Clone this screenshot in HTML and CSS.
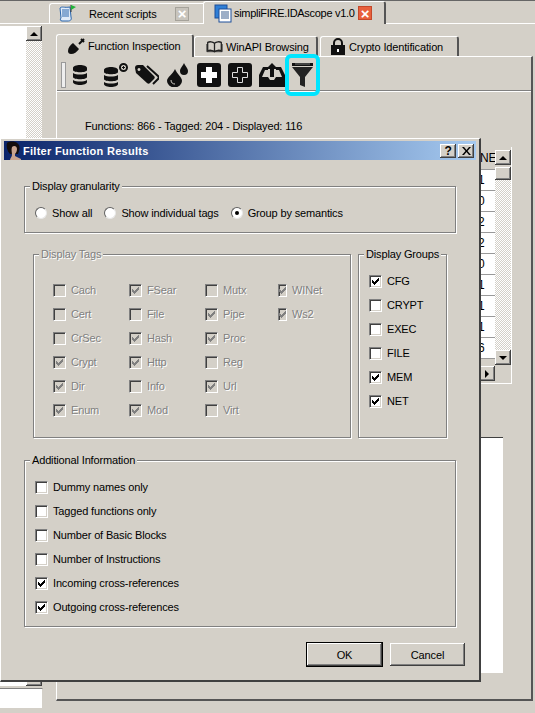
FILE: index.html
```html
<!DOCTYPE html>
<html>
   <head>
      <meta charset="utf-8">
      <meta name="viewport" content="width=device-width, initial-scale=1.0"/>
      <title>Filter Function Results</title>
      <link rel="stylesheet" href="styles.css">
   </head>
   <body>
      <!--shared check mark-->
      <svg class="defs" width="0" height="0">
         <symbol id="tick" viewBox="0 0 7 7"><path d="M0 2h1v3H0zM1 3h1v3H1zM2 4h1v3H2zM3 3h1v3H3zM4 2h1v3H4zM5 1h1v3H5zM6 0h1v3H6z"/></symbol>
      </svg>

      <div class="tabbar">
         <div class="tab">
            <svg class="tab-icon" width="18" height="19" viewBox="0 0 18 19"><path d="M1 4c2-2 4 0 10-1l1 10c1 3-1 4-3 4H3c-2 0-2-2-1-3L1 4z" fill="#dfeaf8" stroke="#2a66ad"/><path d="M3 6h7M3 8h7M3 10h7M3 12h7" stroke="#2a66ad"/><path d="M12 1v7" stroke="#333"/><path d="M12 1l5 2-5 3z" fill="#21b33a"/></svg>
            <span class="tab-text recent">Recent scripts</span>
            <span class="close off">×</span>
         </div>
         <div class="tab active">
            <svg class="tab-icon" width="18" height="19" viewBox="0 0 18 19"><rect x="1" y="1" width="12" height="13" fill="#2f7fd6" stroke="#1c4f9a"/><rect x="5" y="5" width="12" height="13" fill="#fff" stroke="#1c4f9a"/><path d="M7 8h8M7 10h8M7 12h8M7 14h8" stroke="#3a5f8f"/></svg>
            <span class="tab-text plugin-name">simpliFIRE.IDAscope v1.0</span>
            <span class="close">×</span>
         </div>
      </div>

      <div class="workspace">
         <div class="side">
            <div class="side-top">
               <div class="list"></div>
               <div class="vscroll">
                  <span class="sbtn"><i class="up"></i></span>
                  <span class="track"></span>
                  <span class="sbtn"></span>
               </div>
            </div>
            <div class="side-box"></div>
         </div>

         <div class="plugin">
            <div class="subtabs">
               <div class="subtab active">
                  <svg width="17" height="17" viewBox="0 0 17 17"><path d="M16 1l-5 5" stroke="#111" stroke-width="2"/><path d="M13 1l3 3" stroke="#111" stroke-width="2"/><path d="M5 5l6 6c-2 3-5 5-8 5-2 0-3-1-3-3 0-3 2-6 5-8z" fill="#111"/></svg>
                  <span>Function Inspection</span>
               </div>
               <div class="subtab">
                  <svg width="17" height="14" viewBox="0 0 20 15"><path d="M10 3C8 1 4 1 2 2v10c2-1 6-1 8 1 2-2 6-2 8-1V2c-2-1-6-1-8 1zM10 3v10" fill="#d4d0c8" stroke="#222" stroke-width="1.500"/><path d="M1 4v9h18V4" fill="none" stroke="#222"/></svg>
                  <span>WinAPI Browsing</span>
               </div>
               <div class="subtab">
                  <svg width="14" height="17" viewBox="0 0 14 17"><path d="M3 8V5a4 4 0 0 1 8 0v3" fill="none" stroke="#111" stroke-width="2"/><path d="M0 7h14v10H0z" fill="#111"/><path d="M6 11h2v3H6z" fill="#fff"/></svg>
                  <span>Crypto Identification</span>
               </div>
            </div>

            <div class="pane">
               <div class="toolbar">
                  <span class="grip"></span>
                  <svg class="tool" width="24" height="20" viewBox="0 0 24 20"><path d="M0 3c0-4 14-4 14 0v2c0 3-14 3-14 0zM0 8c3 2 11 2 14 0v4c0 3-14 3-14 0zM0 15c3 2 11 2 14 0v2c0 4-14 4-14 0z"/></svg>
                  <svg class="tool" width="24" height="24" viewBox="0 0 24 24"><path d="M0 7c0-4 14-4 14 0v2c0 3-14 3-14 0zM0 12c3 2 11 2 14 0v4c0 3-14 3-14 0zM0 19c3 2 11 2 14 0v2c0 4-14 4-14 0z"/><circle cx="19.500" cy="4.500" r="3.500" fill="#d4d0c8" stroke="#111" stroke-width="2"/><path d="M18 4h3v1h-3zM19 3h1v3h-1z"/></svg>
                  <svg class="tool" width="24" height="20" viewBox="0 0 24 20"><path d="M0 3c0-2 1-3 3-3h5l11 11c1 1 1 2 0 3l-4 4c-1 1-2 1-3 0L1 8zM4 3a1.500 1.500 0 1 0 .01 0z" fill-rule="evenodd"/><path d="M12 1l11 10c1 1 1 2 0 3l-5 5" fill="none" stroke="#111" stroke-width="2"/></svg>
                  <svg class="tool" width="24" height="24" viewBox="0 0 24 24"><path d="M9 6c2 5 7 8 7 12a7 6 0 0 1-15 0c0-4 6-7 8-12z"/><path d="M5 17c0 3 2 4 4 4" fill="none" stroke="#d4d0c8"/><path d="M18 0c1 3 4 5 4 8a4 4 0 0 1-8 0c0-3 3-5 4-8z"/></svg>
                  <svg class="tool" width="24" height="24" viewBox="0 0 24 24"><rect width="24" height="24" rx="3"/><path d="M9 4h6v5h5v6h-5v5H9v-5H4V9h5z" fill="#fff"/></svg>
                  <svg class="tool" width="24" height="24" viewBox="0 0 24 24"><rect width="24" height="24" rx="3"/><path d="M9.500 4.500h5v5h5v5h-5v5h-5v-5h-5v-5h5z" fill="#111" stroke="#ddd"/></svg>
                  <svg class="tool" width="26" height="24" viewBox="0 0 26 24"><path d="M0 12l4-8h5v3H6l-3 7h6l2 3h4l2-3h6l-3-7h-3V4h5l4 8v12H0z"/><path d="M13 0l6 6h-4v8h-4V6H7z"/></svg>
                  <span class="funnel">
                     <svg class="tool" width="21" height="24" viewBox="0 0 21 24"><path d="M0 0h21v3H0z" fill="#111"/><path d="M0 4h21l-8 10v10l-5-2v-8z" fill="#222"/><path d="M3 1h15" stroke="#777"/></svg>
                  </span>
               </div>

               <p class="status">Functions: 866 - Tagged: 204 - Displayed: 116</p>

               <div class="results">
                  <div class="results-main">
                     <div class="cells">
                        <div class="cell head">NET</div>
                        <div class="cell">1</div>
                        <div class="cell">0</div>
                        <div class="cell">2</div>
                        <div class="cell">2</div>
                        <div class="cell">0</div>
                        <div class="cell">1</div>
                        <div class="cell">1</div>
                        <div class="cell">1</div>
                        <div class="cell">6</div>
                     </div>
                     <div class="hscroll"><span class="sbtn"><i class="right"></i></span></div>
                  </div>
                  <div class="vscroll table-scroll">
                     <span class="sbtn"><i class="up"></i></span>
                     <span class="sbtn thumb"></span>
                     <span class="track"></span>
                     <span class="sbtn"><i class="down"></i></span>
                  </div>
               </div>

               <div class="notes"></div>
            </div>
         </div>
      </div>

      <!--the filter dialog floats over the main window-->
      <div class="dialog">
         <div class="titlebar">
            <svg width="17" height="19" viewBox="0 0 17 19"><path d="M1 2c2-2 8-2 10 0 3 2 3 5 2 8l-1 3H4C1 10 0 5 1 2z" fill="#140d0c"/><path d="M6 6c2-2 5-1 5 2 0 2-1 4-2 5v2l6 3v1H4c0-2 2-3 2-5 0-3-1-5 0-8z" fill="#c9a48f"/></svg>
            <span class="title-text">Filter Function Results</span>
            <span class="title-btn help">?</span>
            <span class="title-btn">
               <svg width="9" height="8" viewBox="0 0 9 8"><path d="M0 0h2l2.500 3L7 0h2L5.500 4 9 8H7L4.500 5 2 8H0l3.500-4z"/></svg>
            </span>
         </div>

         <div class="dialog-body">
            <fieldset class="group granularity">
               <legend>Display granularity</legend>
               <div class="radios">
                  <label class="opt"><span class="radio"></span>Show all</label>
                  <label class="opt"><span class="radio"></span>Show individual tags</label>
                  <label class="opt"><span class="radio on"></span>Group by semantics</label>
               </div>
            </fieldset>

            <div class="group-row">
               <fieldset class="group tags off">
                  <legend>Display Tags</legend>
                  <div class="tag-grid">
                     <label class="opt"><span class="box"></span>Cach</label>
                     <label class="opt"><span class="box"></span>Cert</label>
                     <label class="opt"><span class="box"></span>CrSec</label>
                     <label class="opt"><span class="box"><svg><use href="#tick"/></svg></span>Crypt</label>
                     <label class="opt"><span class="box"><svg><use href="#tick"/></svg></span>Dir</label>
                     <label class="opt"><span class="box"><svg><use href="#tick"/></svg></span>Enum</label>
                     <label class="opt"><span class="box"><svg><use href="#tick"/></svg></span>FSear</label>
                     <label class="opt"><span class="box"></span>File</label>
                     <label class="opt"><span class="box"><svg><use href="#tick"/></svg></span>Hash</label>
                     <label class="opt"><span class="box"><svg><use href="#tick"/></svg></span>Http</label>
                     <label class="opt"><span class="box"></span>Info</label>
                     <label class="opt"><span class="box"><svg><use href="#tick"/></svg></span>Mod</label>
                     <label class="opt"><span class="box"></span>Mutx</label>
                     <label class="opt"><span class="box"><svg><use href="#tick"/></svg></span>Pipe</label>
                     <label class="opt"><span class="box"><svg><use href="#tick"/></svg></span>Proc</label>
                     <label class="opt"><span class="box"></span>Reg</label>
                     <label class="opt"><span class="box"><svg><use href="#tick"/></svg></span>Url</label>
                     <label class="opt"><span class="box"></span>Virt</label>
                     <label class="opt"><span class="box"><svg><use href="#tick"/></svg></span>WINet</label>
                     <label class="opt"><span class="box"><svg><use href="#tick"/></svg></span>Ws2</label>
                  </div>
               </fieldset>

               <fieldset class="group groups">
                  <legend>Display Groups</legend>
                  <div class="stack">
                     <label class="opt"><span class="box"><svg><use href="#tick"/></svg></span>CFG</label>
                     <label class="opt"><span class="box"></span>CRYPT</label>
                     <label class="opt"><span class="box"></span>EXEC</label>
                     <label class="opt"><span class="box"></span>FILE</label>
                     <label class="opt"><span class="box"><svg><use href="#tick"/></svg></span>MEM</label>
                     <label class="opt"><span class="box"><svg><use href="#tick"/></svg></span>NET</label>
                  </div>
               </fieldset>
            </div>

            <fieldset class="group extra">
               <legend>Additional Information</legend>
               <div class="stack">
                  <label class="opt"><span class="box"></span>Dummy names only</label>
                  <label class="opt"><span class="box"></span>Tagged functions only</label>
                  <label class="opt"><span class="box"></span>Number of Basic Blocks</label>
                  <label class="opt"><span class="box"></span>Number of Instructions</label>
                  <label class="opt"><span class="box"><svg><use href="#tick"/></svg></span>Incoming cross-references</label>
                  <label class="opt"><span class="box"><svg><use href="#tick"/></svg></span>Outgoing cross-references</label>
               </div>
            </fieldset>

            <div class="buttons">
               <button class="btn default">OK</button>
               <button class="btn">Cancel</button>
            </div>
         </div>
      </div>
   </body>
</html>
```

FILE: styles.css
```css
* {
box-sizing: border-box;
}
html, body {
margin: 0;
height: 100%;
}
body {
position: relative;
width: 535px;
height: 713px;
overflow: hidden;
background-color: #d4d0c8;
color: #000;
font-family: "Liberation Sans", Arial, sans-serif;
font-size: 11px;
letter-spacing: -0.15px;
border-top: 1px solid #666;
}
svg {
display: block;
flex: none;
}
.defs {
position: absolute;
}

/* top tabs */
.tabbar {
display: flex;
align-items: flex-end;
height: 23px;
padding-left: 49px;
border-bottom: 1px solid #fff;
}
.tab {
display: flex;
align-items: center;
width: 154px;
height: 20px;
padding: 0 14px 0 9px;
background-color: #d4d0c8;
border-top: 1px solid #fff;
border-left: 1px solid #fff;
border-radius: 3px 0 0 0;
}
.tab.active {
width: 183px;
height: 23px;
margin-bottom: -1px;
padding: 0 12px 0 10px;
border-right: 2px solid #555;
border-radius: 3px 3px 0 0;
}
.tab-text {
margin-left: 2px;
white-space: nowrap;
}
.tab-text.recent {
margin-left: 12px;
}
.tab-text.plugin-name {
letter-spacing: -0.3px;
}
.close {
display: flex;
align-items: center;
justify-content: center;
width: 14px;
height: 14px;
margin-left: auto;
background-color: #e8603c;
border: 1px solid #c5482a;
color: #fff;
font-size: 15px;
font-weight: bold;
}
.close.off {
background-color: #c8c4bc;
border-color: #a5a29a;
}

/* main area below the tabs */
.workspace {
display: flex;
height: 689px;
}
.side {
display: flex;
flex-direction: column;
width: 44px;
padding-top: 2px;
}
.side-top {
display: flex;
height: 660px;
}
.list {
width: 26px;
background-color: #fff;
}
.vscroll {
display: flex;
flex-direction: column;
width: 16px;
}
.track {
flex: 1;
background-image: conic-gradient(#fff 25%, #d4d0c8 0 50%, #fff 0 75%, #d4d0c8 0);
background-size: 2px 2px;
}
.sbtn {
display: flex;
align-items: center;
justify-content: center;
flex: none;
width: 16px;
height: 15px;
background-color: #d4d0c8;
box-shadow: inset -1px -1px 0 #404040, inset 1px 1px 0 #fff, inset -2px -2px 0 #808080;
}
.sbtn i {
width: 0;
height: 0;
border: 4px solid transparent;
}
.sbtn .up {
border-top: 0;
border-bottom-color: #000;
}
.sbtn .down {
border-bottom: 0;
border-top-color: #000;
}
.sbtn .right {
border-right: 0;
border-left-color: #000;
}
.side-box {
width: 43px;
height: 20px;
margin-top: 2px;
background-color: #fff;
border-top: 1px solid #808080;
border-right: 1px solid #d4d0c8;
}

/* inner tabs and pane */
.plugin {
margin-left: 12px;
width: 477px;
padding-top: 10px;
}
.subtabs {
display: flex;
align-items: flex-end;
height: 22px;
}
.subtab {
display: flex;
align-items: center;
gap: 3px;
width: 124px;
height: 20px;
padding-left: 11px;
border-top: 1px solid #fff;
border-left: 1px solid #fff;
border-right: 2px solid #555;
border-radius: 3px 3px 0 0;
}
.subtab:nth-child(3) {
gap: 4px;
width: 139px;
margin-left: 2px;
padding-left: 10px;
}
.subtab.active {
position: relative;
z-index: 1;
width: 138px;
height: 23px;
margin-bottom: -1px;
background-color: #d4d0c8;
}
.pane {
height: 645px;
border-top: 1px solid #fff;
border-left: 1px solid #fff;
border-right: 2px solid #555;
border-bottom: 2px solid #555;
}
.toolbar {
display: flex;
align-items: center;
gap: 7px;
height: 34px;
padding-left: 4px;
padding-top: 2px;
border-bottom: 1px solid #808080;
box-shadow: 0 1px 0 #fff;
}
.grip {
width: 5px;
height: 26px;
background-color: #eee;
border: 1px solid #999;
}
.tool {
fill: #111;
}
.funnel {
position: relative;
}
/* highlight drawn on top of the screenshot */
.funnel::after {
content: "";
position: absolute;
left: -7px;
right: -7px;
top: -9px;
bottom: -9px;
border: 4px solid #00e5ff;
border-radius: 6px;
}
.status {
margin: 28px 0 0 28px;
line-height: 14px;
}
.results {
display: flex;
width: 427px;
height: 237px;
margin: 14px 0 0 28px;
border-right: 1px solid #fff;
border-bottom: 1px solid #fff;
}
.results-main {
flex: 1;
overflow: hidden;
}
.cells {
height: 219px;
padding-left: 380px;
padding-top: 1px;
}
.cell {
width: 30px;
height: 21px;
padding: 3px 0 0 13px;
background-color: #fff;
border-bottom: 1px solid #999;
font-size: 12px;
overflow: hidden;
}
.cell.head {
height: 22px;
padding-left: 15px;
background-color: #d4d0c8;
white-space: nowrap;
}
.hscroll {
display: flex;
justify-content: flex-end;
}
.table-scroll {
padding-top: 3px;
height: 218px;
}
.thumb {
margin-top: 2px;
height: 13px;
}
.notes {
width: 418px;
height: 236px;
margin: 53px 0 0 28px;
background-color: #fff;
border-top: 1px solid #404040;
}

/* dialog */
.dialog {
position: absolute;
left: 0;
top: 137px;
width: 481px;
height: 544px;
background-color: #d4d0c8;
border-top: 1px solid #fff;
border-left: 1px solid #fff;
border-right: 2px solid #404040;
border-bottom: 2px solid #404040;
}
.titlebar {
display: flex;
align-items: center;
height: 19px;
margin: 2px 3px 0 3px;
padding-left: 2px;
background: linear-gradient(to right, #0a246a, #a6caf0);
color: #fff;
font-weight: bold;
}
.title-text {
flex: 1;
letter-spacing: 0.28px;
}
.title-btn {
display: flex;
align-items: center;
justify-content: center;
width: 16px;
height: 14px;
margin-right: 2px;
background-color: #d4d0c8;
color: #000;
font-size: 12px;
box-shadow: inset -1px -1px 0 #404040, inset 1px 1px 0 #fff, inset -2px -2px 0 #808080;
}
.dialog-body {
padding: 20px 23px 0 23px;
}
.group {
margin: 0;
min-width: 0;
padding: 0;
border: 1px solid #808080;
box-shadow: 1px 1px 0 #fff, inset 1px 1px 0 #fff;
}
.group legend {
margin-left: 5px;
padding: 0 2px;
line-height: 13px;
background-color: #d4d0c8;
}
.granularity {
width: 432px;
height: 53px;
}
.radios {
display: flex;
gap: 12px;
padding: 13px 0 0 10px;
}
.opt {
display: flex;
align-items: center;
gap: 5px;
height: 14px;
white-space: nowrap;
}
.radio {
position: relative;
width: 12px;
height: 12px;
background-color: #fff;
border: 1px solid;
border-color: #606060 #e8e8e8 #e8e8e8 #606060;
border-radius: 50%;
}
.radio.on::after {
content: "";
position: absolute;
left: 3px;
top: 3px;
width: 4px;
height: 4px;
background-color: #000;
border-radius: 50%;
}
.box {
display: flex;
align-items: center;
justify-content: center;
width: 13px;
height: 13px;
background-color: #fff;
border: 1px solid;
border-color: #808080 #fff #fff #808080;
box-shadow: inset 1px 1px 0 #404040, inset -1px -1px 0 #d4d0c8;
}
.box svg {
width: 7px;
height: 7px;
}
.group-row {
display: flex;
gap: 7px;
margin: 15px 0 0 9px;
}
.tags {
width: 318px;
height: 190px;
}
.tag-grid {
display: grid;
grid-auto-flow: column;
grid-template-rows: repeat(6, 24px);
grid-template-columns: 76px 76px 73px 30px;
align-items: center;
padding: 17px 0 0 19px;
}
.tags.off .opt {
color: #808080;
text-shadow: 1px 1px 0 #fff;
}
.tags.off .box {
background-color: #d4d0c8;
}
.tags.off .box svg {
fill: #808080;
}
.tags.off legend {
color: #808080;
text-shadow: 1px 1px 0 #fff;
}
.groups {
width: 89px;
height: 190px;
}
.stack {
display: grid;
grid-template-rows: repeat(6, 24px);
align-items: center;
padding: 8px 0 0 10px;
}
.extra {
width: 432px;
height: 173px;
margin-top: 16px;
}
.buttons {
display: flex;
align-items: center;
justify-content: flex-end;
gap: 7px;
margin: 15px -9px 0 0;
}
.btn {
width: 75px;
height: 23px;
padding: 0;
background-color: #d4d0c8;
border: 0;
font: inherit;
letter-spacing: inherit;
box-shadow: inset -1px -1px 0 #404040, inset 1px 1px 0 #fff, inset -2px -2px 0 #808080;
}
.btn.default {
width: 77px;
height: 25px;
border: 1px solid #000;
}
```
